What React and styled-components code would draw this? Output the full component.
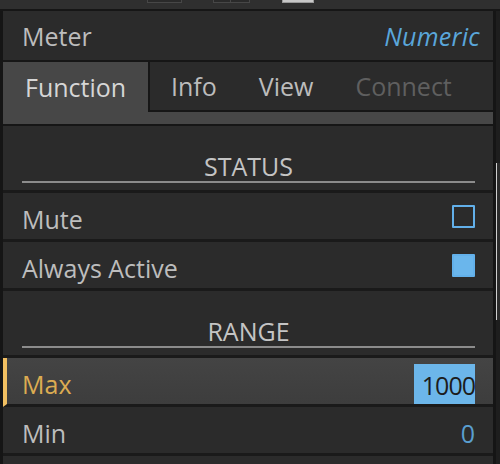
import styled, { createGlobalStyle } from 'styled-components'

const GlobalStyle = createGlobalStyle`
  html, body {
    margin: 0;
    padding: 0;
    background: #1b1b1b;
  }
  body {
    font-family: 'Open Sans', 'DejaVu Sans', sans-serif;
  }
`

function App() {
  return (
    <>
      <GlobalStyle />
      <Screen>
        <Toolbar>
          <ToolButton $left={147} $width={33} />
          <ToolButton $left={213} $width={17} />
          <ToolButton $left={230} $width={18} />
          <ToolButton $left={282} $width={30} $lit />
        </Toolbar>
        <Body>
          <LeftEdge />
          <Panel>
            <Header>
              <Title>Meter</Title>
              <Kind>Numeric</Kind>
            </Header>
            <Tabs>
              <Tab $active>Function</Tab>
              <TabRest>
                <Tab>Info</Tab>
                <Tab>View</Tab>
                <Tab $disabled>Connect</Tab>
              </TabRest>
            </Tabs>
            <TabStrip />

            <Section>
              <SectionTitle>STATUS</SectionTitle>
            </Section>
            <Row>
              <Label>Mute</Label>
              <Check />
            </Row>
            <Row>
              <Label>Always Active</Label>
              <Check $checked />
            </Row>

            <Section>
              <SectionTitle>RANGE</SectionTitle>
            </Section>
            <Row $selected>
              <Label $selected>Max</Label>
              <ValueBox>1000</ValueBox>
            </Row>
            <Row>
              <Label>Min</Label>
              <Value>0</Value>
            </Row>
            <Row />
          </Panel>
          <RightEdge>
            <Scroll />
          </RightEdge>
        </Body>
      </Screen>
    </>
  )
}

export default App

const Screen = styled.div`
  width: 500px;
  height: 464px;
  overflow: hidden;
  display: flex;
  flex-direction: column;
  background: #1b1b1b;
`
const Toolbar = styled.div`
  position: relative;
  height: 9px;
  flex-shrink: 0;
  background: #2f2f2f;
  border-bottom: 2px solid #161616;
`
const ToolButton = styled.div`
  position: absolute;
  top: 0;
  left: ${(p) => p.$left}px;
  width: ${(p) => p.$width}px;
  height: 2px;
  border: 1px solid ${(p) => (p.$lit ? '#9a9a9a' : '#474747')};
  border-top: none;
  background: ${(p) => (p.$lit ? '#c8c8c8' : '#2a2a2a')};
`
const Body = styled.div`
  flex: 1;
  display: flex;
  min-height: 0;
`
const LeftEdge = styled.div`
  width: 3px;
  background: #151515;
`
const Panel = styled.div`
  width: 490px;
  display: flex;
  flex-direction: column;
  background: #2b2b2b;
  & > * {
    flex-shrink: 0;
  }
`
const RightEdge = styled.div`
  flex: 1;
  border-left: 3px solid #151515;
  background: #1e1e1e;
  padding-top: 152px;
`
const Scroll = styled.div`
  height: 157px;
  border-left: 1px solid #cfcfcf;
  background: #2c2c2c;
`
const Header = styled.div`
  height: 49px;
  display: flex;
  align-items: center;
  justify-content: space-between;
  padding: 0 13px 0 19px;
  border-bottom: 2px solid #161616;
  background: #2b2b2b;
`
const Title = styled.span`
  font-size: 25px;
  color: #bdbdbd;
`
const Kind = styled.span`
  font-size: 25px;
  font-style: italic;
  letter-spacing: 0.3px;
  color: #5aa6da;
`
const Tabs = styled.div`
  height: 50px;
  display: flex;
  background: #474747;
`
const TabRest = styled.div`
  flex: 1;
  display: flex;
  background: #2b2b2b;
  border-left: 2px solid #161616;
  border-bottom: 2px solid #161616;
`
const Tab = styled.div`
  display: flex;
  align-items: center;
  padding: 0 ${(p) => (p.$active ? '21px 0 22px' : '21px')};
  width: ${(p) => (p.$active ? '145px' : 'auto')};
  box-sizing: border-box;
  font-size: 25px;
  color: ${(p) => (p.$disabled ? '#5f5f5f' : p.$active ? '#d6d6d6' : '#bcbcbc')};
  background: ${(p) => (p.$active ? '#474747' : 'transparent')};
`
const TabStrip = styled.div`
  height: 12px;
  background: #474747;
  border-bottom: 2px solid #161616;
`
const Section = styled.div`
  height: 67px;
  display: flex;
  align-items: flex-end;
  padding: 0 18px 7px 19px;
  border-bottom: 3px solid #1a1a1a;
  box-sizing: border-box;
`
const SectionTitle = styled.div`
  flex: 1;
  text-align: center;
  font-size: 25px;
  line-height: 30px;
  color: #c4c4c4;
  border-bottom: 2px solid #8c8c8c;
`
const Row = styled.div`
  height: 46px;
  display: flex;
  align-items: center;
  justify-content: space-between;
  padding: 0 18px 0 ${(p) => (p.$selected ? '15px' : '19px')};
  border-left: ${(p) => (p.$selected ? '4px solid #f2c062' : 'none')};
  border-bottom: 3px solid #1a1a1a;
  background: ${(p) => (p.$selected ? 'linear-gradient(#444444, #3d3d3d)' : '#2b2b2b')};
`
const Label = styled.span`
  margin-top: 5px;
  font-size: 25px;
  color: ${(p) => (p.$selected ? '#dcac52' : '#bdbdbd')};
`
const Check = styled.div`
  width: 23px;
  height: 23px;
  box-sizing: border-box;
  border: 2px solid #62b0ea;
  border-radius: 1px;
  background: ${(p) => (p.$checked ? '#6ab6ec' : 'transparent')};
`
const ValueBox = styled.div`
  align-self: flex-end;
  height: 40px;
  width: 61px;
  display: flex;
  align-items: center;
  justify-content: flex-end;
  padding-top: 2px;
  box-sizing: border-box;
  background: #6cb6ea;
  color: #1c1c1c;
  font-size: 25px;
  letter-spacing: -1px;
`
const Value = styled.span`
  margin-top: 5px;
  font-size: 25px;
  color: #5a9fd0;
`
